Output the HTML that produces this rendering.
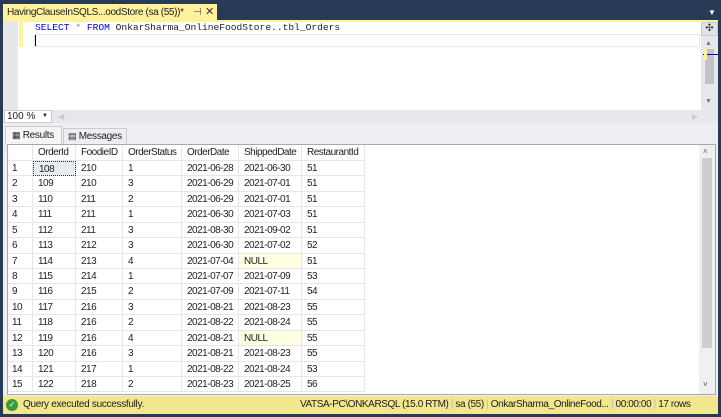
<!DOCTYPE html>
<html><head><style>
*{margin:0;padding:0;box-sizing:border-box}
body{width:721px;height:417px;background:#293a56;position:relative;overflow:hidden;font-family:"Liberation Sans",sans-serif;font-size:11px;color:#1e1e1e}
.a{position:absolute;white-space:nowrap}
.tab{left:3px;top:4px;width:214px;height:17px;background:#fff29d;font-size:10px;letter-spacing:-0.35px;line-height:17px;padding-left:4px;color:#1e1e1e;white-space:nowrap;overflow:hidden}
.code{font-family:"Liberation Mono",monospace;font-size:9.6px}
.cell{position:absolute;height:15px;line-height:15px;padding-left:5px;white-space:nowrap;font-size:10px;letter-spacing:-0.5px;color:#1e1e1e;overflow:hidden}
</style></head><body>
<div class="a tab">HavingClauseInSQLS...oodStore (sa (55))*</div>
<div class="a" style="left:193px;top:5px;font-size:10px;color:#555;line-height:15px">⊣</div>
<div class="a" style="left:205px;top:4px;font-size:11px;line-height:17px;color:#333">✕</div>
<div class="a" style="left:708px;top:8px;color:#fff;font-size:8px">▼</div>
<div class="a" style="left:3px;top:20px;width:715px;height:2px;background:#fff29d"></div>
<div class="a" style="left:3px;top:22px;width:715px;height:88px;background:#fff"></div>
<div class="a" style="left:3px;top:22px;width:15px;height:88px;background:#e6e7e8"></div>
<div class="a" style="left:19px;top:22px;width:4px;height:25px;background:#fff29d"></div>
<div class="a" style="left:34px;top:34px;width:666px;height:13px;border:1px solid #e8e8ec"></div>
<div class="a" style="left:35px;top:35px;width:1px;height:11px;background:#000"></div>
<div class="a code" style="left:35px;top:21px;line-height:14px"><span style="color:#0000ff">SELECT</span> <span style="color:#808080">*</span> <span style="color:#0000ff">FROM</span> OnkarSharma_OnlineFoodStore..tbl_Orders</div>
<div class="a" style="left:701px;top:22px;width:17px;height:14px;background:#dfe3ea;border:1px solid #c7cbd2;font-size:10px;text-align:center;line-height:12px;color:#333">✣</div>
<div class="a" style="left:701px;top:36px;width:17px;height:74px;background:#e8e8ec"></div>
<div class="a" style="left:705px;top:40px;font-size:7px;color:#777">▲</div>
<div class="a" style="left:705px;top:49px;width:9px;height:35px;background:#c2c3c9"></div>
<div class="a" style="left:703px;top:54px;width:15px;height:1px;background:#0000c0"></div>
<div class="a" style="left:704px;top:49px;width:3px;height:11px;background:#fff29d"></div>
<div class="a" style="left:705px;top:98px;font-size:7px;color:#777">▼</div>
<div class="a" style="left:3px;top:110px;width:715px;height:13px;background:#e8e8ec"></div>
<div class="a" style="left:4px;top:110px;width:48px;height:13px;background:#fff;border:1px solid #ccc;font-size:10px;line-height:11px;padding-left:2px">100 %<span style="position:absolute;right:3px;font-size:6px">▼</span></div>
<div class="a" style="left:58px;top:112px;font-size:8px;color:#ccc">◀</div>
<div class="a" style="left:692px;top:112px;font-size:8px;color:#ccc">▶</div>
<div class="a" style="left:3px;top:123px;width:715px;height:273px;background:#eeeef2"></div>
<div class="a" style="left:5px;top:126px;width:57px;height:19px;background:#f5f5f5;border:1px solid #ccc;border-bottom:none;font-size:10px;letter-spacing:-0.3px;line-height:17px;padding-left:6px"><span style="font-size:9px">▦</span> Results</div>
<div class="a" style="left:63px;top:128px;width:64px;height:16px;background:#eeeef2;border:1px solid #ccc;border-bottom:none;font-size:10px;letter-spacing:-0.3px;line-height:15px;padding-left:4px"><span style="font-size:9px">▤</span> Messages</div>
<div class="a" style="left:7px;top:144px;width:709px;height:251px;background:#fff;border:1px solid #a9a9a9"></div>
<div class="a" style="left:699px;top:145px;width:16px;height:249px;background:#f0f0f0"></div>
<div class="a" style="left:702px;top:158px;width:10px;height:190px;background:#cdcdcd"></div>
<div class="a" style="left:703px;top:147px;font-size:8px;color:#555">˄</div>
<div class="a" style="left:703px;top:380px;font-size:8px;color:#555">˅</div>
<div id="g"></div>
<div class="a" style="left:3px;top:396px;width:715px;height:18px;background:#f2e68e"></div>
<div class="a" style="left:6px;top:399px;width:12px;height:12px;border-radius:50%;background:#3b9a3b;color:#fff;font-size:8px;text-align:center;line-height:12px">✓</div>
<div class="a" style="left:23px;top:396px;line-height:18px;font-size:10px;letter-spacing:-0.3px">Query executed successfully.</div>
<div class="a" style="left:300px;top:396px;line-height:18px;font-size:10px;letter-spacing:-0.4px;white-space:nowrap">VATSA-PC\ONKARSQL (15.0 RTM) <span style="color:#bbb">|</span> sa (55) <span style="color:#bbb">|</span> OnkarSharma_OnlineFood... <span style="color:#bbb">|</span> 00:00:00 <span style="color:#bbb">|</span> 17 rows</div>
<script>
var cols=[8,33,76,123,182,239,302,365];
var hdr=["","OrderId","FoodieID","OrderStatus","OrderDate","ShippedDate","RestaurantId"];
var d=[[108,210,1,"2021-06-28","2021-06-30",51],[109,210,3,"2021-06-29","2021-07-01",51],[110,211,2,"2021-06-29","2021-07-01",51],[111,211,1,"2021-06-30","2021-07-03",51],[112,211,3,"2021-08-30","2021-09-02",51],[113,212,3,"2021-06-30","2021-07-02",52],[114,213,4,"2021-07-04","NULL",51],[115,214,1,"2021-07-07","2021-07-09",53],[116,215,2,"2021-07-09","2021-07-11",54],[117,216,3,"2021-08-21","2021-08-23",55],[118,216,2,"2021-08-22","2021-08-24",55],[119,216,4,"2021-08-21","NULL",55],[120,216,3,"2021-08-21","2021-08-23",55],[121,217,1,"2021-08-22","2021-08-24",53],[122,218,2,"2021-08-23","2021-08-25",56]];
var h="";
function row(vals,top,isH,r){for(var c=0;c<7;c++){var w=cols[c+1]-cols[c];var bg="#fff";var v=vals[c];
if(!isH&&v==="NULL")bg="#ffffe1";
if(!isH&&r===0&&c===1)bg="#e8ecf0";
var b="border-right:1px solid #e6e6e6;border-bottom:1px solid #e6e6e6;";
if(!isH&&r===0&&c===1)b="border:1px dotted #333;";
h+='<div class="cell" style="left:'+cols[c]+'px;top:'+top+'px;width:'+w+'px;height:'+(isH?16:15.4)+'px;background:'+bg+';'+b+(c==0?'padding-left:4px;':'')+'">'+v+'</div>';}}
row(hdr,145,true);
for(var i=0;i<d.length;i++){row([i+1].concat(d[i]),161+i*15.43,false,i);}
document.getElementById("g").innerHTML=h;
</script>
</body></html>
